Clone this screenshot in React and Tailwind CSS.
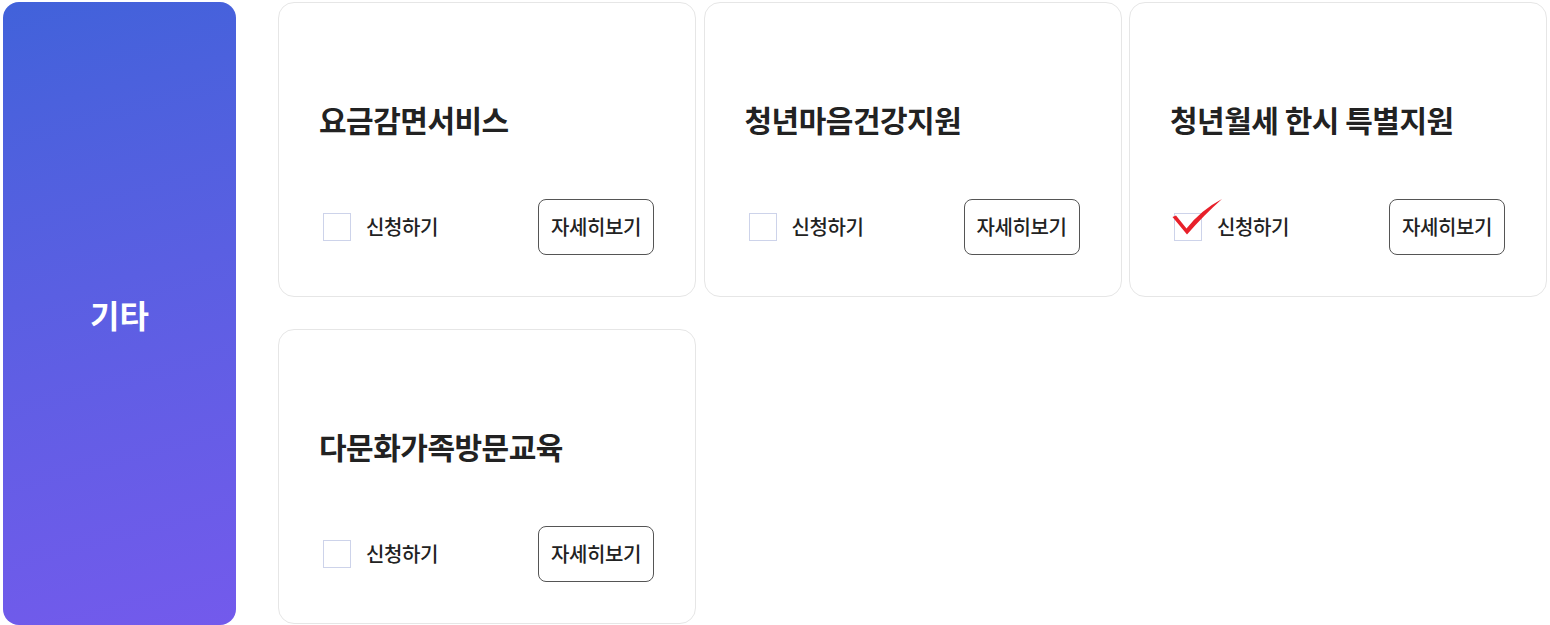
import React from "react";

const items = [
  { title: "요금감면서비스", checked: false },
  { title: "청년마음건강지원", checked: false },
  { title: "청년월세 한시 특별지원", checked: true },
  { title: "다문화가족방문교육", checked: false },
];

function Card({ title, checked }) {
  return (
    <div className="h-[295px] rounded-[16px] border border-[#e6e6e6] bg-white pl-[40px] pr-[41px] pt-[98px]">
      <h3 className="text-[30px] leading-[36px] font-bold tracking-[-0.5px] text-[#222]">{title}</h3>
      <div className="mt-[62px] flex h-[56px] items-center justify-between">
        <label className="flex items-center">
          <span className="relative ml-[4px] block h-[28px] w-[28px] border border-[#cdd3ea] bg-white">
            {checked && (
              <svg
                className="absolute left-[-4px] top-[-18px]"
                width="56"
                height="42"
                viewBox="0 0 56 42"
              >
                <path
                  d="M1.5 21 L5 19.5 L15.5 32.5 Q30 14 51 3 Q33 19 16 38.5 Z"
                  fill="#e8202a"
                />
              </svg>
            )}
          </span>
          <span className="ml-[15px] text-[20px] leading-[24px] font-medium tracking-[-0.4px] text-[#222]">신청하기</span>
        </label>
        <button className="h-[56px] w-[116px] rounded-[8px] border border-[#555] bg-white text-[20px] font-medium tracking-[-0.4px] text-[#222]">
          자세히보기
        </button>
      </div>
    </div>
  );
}

export default function App() {
  return (
    <div
      className="flex h-[625px] w-[1550px] bg-white pt-[2px] pl-[3px]"
      style={{ fontFamily: '"Noto Sans CJK KR", "Noto Sans", sans-serif' }}
    >
      <div className="flex h-[623px] w-[233px] shrink-0 items-center justify-center rounded-[16px] bg-linear-165 from-[#4162DA] to-[#735AEC]">
        <span className="text-[32px] font-bold text-white">기타</span>
      </div>
      <div className="ml-[42px] grid w-[1269px] grid-cols-3 content-start gap-x-[7.5px] gap-y-[32px]">
        {items.map((it) => (
          <Card key={it.title} {...it} />
        ))}
      </div>
    </div>
  );
}
